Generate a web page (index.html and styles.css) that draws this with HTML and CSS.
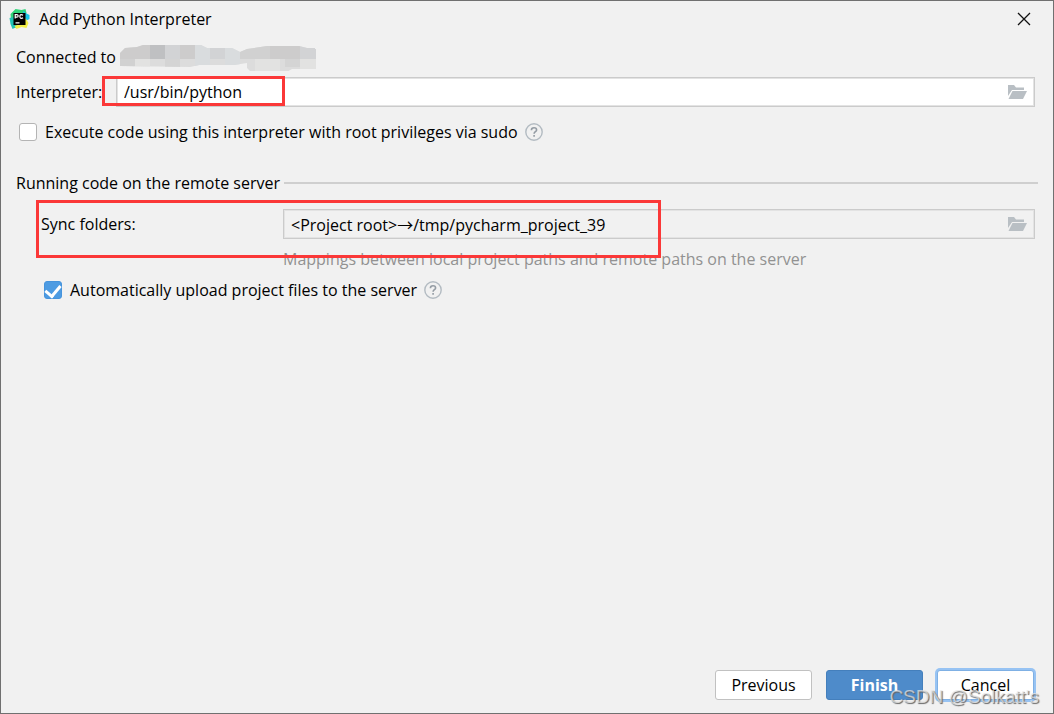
FILE: index.html
```html
<!DOCTYPE html>
<html lang="en">
<head>
<meta charset="utf-8">
<title>Add Python Interpreter</title>
<link rel="stylesheet" href="styles.css">
</head>
<body>
<svg class="defs" aria-hidden="true">
  <symbol id="folder" viewBox="0 0 20 16">
    <path d="M1 1h6l2 2.500h8V6H5L1 12z" fill="#b9bfc4"/>
    <path d="M5.500 7H20l-4 8H1.500z" fill="#b9bfc4"/>
  </symbol>
  <symbol id="help" viewBox="0 0 18 18">
    <circle cx="9" cy="9" r="8.200" fill="none" stroke="#b3bbc2" stroke-width="1.400"/>
    <path d="M6.400 7.200C6.400 5.500 7.500 4.700 9 4.700s2.600.9 2.600 2.200C11.600 8.700 9.100 8.700 9.100 10.700M9.100 12v1.700" fill="none" stroke="#949ca4" stroke-width="1.600"/>
  </symbol>
</svg>
<main class="dialog">
  <header class="titlebar">
    <svg class="logo" viewBox="0 0 20 20" aria-hidden="true">
      <path d="M1 5 6 0l6 1 4-1 1 4-5 12-7 3-3-3z" fill="#2fd579"/>
      <path d="M0 9l4-1 3 10-4 2-2-5z" fill="#20c3b4"/>
      <path d="M14 2l2 2 4 2v4l-4 2-4-5z" fill="#18c6e8"/>
      <path d="M16 9l3 5-2 5-5-1-5 2-2-3 9-3z" fill="#f3ee46"/>
      <path d="M4 4h12v12H4z" fill="#000"/>
      <path d="M5.700 9.500V5.700h1.600q1.400 0 1.400 1.200T7.300 8.200H5.700M13.600 6.300q-2.700-1.600-3.200.6c-.5 2.500 1.500 3 3.200 1.900M6 13.800h4" fill="none" stroke="#fff" stroke-width="1.200"/>
    </svg>
    <h1 class="title">Add Python Interpreter</h1>
    <button class="close" type="button" aria-label="Close">
      <svg class="close-icon" viewBox="0 0 14 14"><path d="M1 1l12 12M13 1 1 13" stroke="#111" stroke-width="1.300"/></svg>
    </button>
  </header>

  <form class="content">
    <div class="connected">
      <span>Connected to</span>
      <svg class="redacted" viewBox="0 0 196 28" role="img" aria-label="Hidden host">
        <clipPath id="smudge"><path d="M0 23V10l5-5 12-1 6-2h58l6 3h25l8 4 7-3 20-3h32l8 2h8v1h11v12l-3 6-6 2h-25l-7 4h-33l-5-5v-5l-13 2H79l-9 2z"/></clipPath>
        <g clip-path="url(#smudge)">
          <path d="M0 0h196v28H0z" fill="#dcdcdc"/>
          <path d="M0 0h30v16H0zM60 0h15v16H60zM150 0h30v16h-30z" fill="#cdcccc"/>
          <path d="M0 16h15v12H0zM120 3h30v13h-30z" fill="#d1d1d1"/>
          <path d="M30 0h15v16H30z" fill="#bfc0c2"/>
          <path d="M45 0h15v16H45zM90 0h15v16H90zM180 0h16v16h-16z" fill="#d2d3d5"/>
          <path d="M75 0h15v28H75zM105 0h15v28h-15z" fill="#d9dcde"/>
          <path d="M15 16h15v12H15zM135 16h25v12h-25zM180 16h16v12h-16z" fill="#e2e2e1"/>
          <path d="M45 16h15v8H45zM165 16h15v8h-15z" fill="#d4d4d4"/>
        </g>
      </svg>
    </div>

    <div class="row">
      <label class="interpreter-label" for="interpreter">Interpreter:</label>
      <div class="field">
        <input class="input" id="interpreter" type="text" value="/usr/bin/python">
        <button class="browse" type="button" aria-label="Browse interpreter"><svg class="folder"><use href="#folder"/></svg></button>
      </div>
      <span class="mark mark-interpreter"></span>
    </div>

    <div class="sudo">
      <input class="check" id="sudo" type="checkbox">
      <label class="check-label" for="sudo">Execute code using this interpreter with root privileges via sudo</label>
      <svg class="help" role="img" aria-label="Help"><use href="#help"/></svg>
    </div>

    <div class="section">
      <h2 class="section-title">Running code on the remote server</h2>
      <span class="rule"></span>
    </div>

    <div class="remote">
      <label class="sync-label" for="sync">Sync folders:</label>
      <div class="field field-readonly">
        <input class="input" id="sync" type="text" readonly value="&lt;Project root&gt;→/tmp/pycharm_project_39">
        <button class="browse" type="button" aria-label="Browse sync folders"><svg class="folder"><use href="#folder"/></svg></button>
      </div>
      <p class="hint">Mappings between local project paths and remote paths on the server</p>
      <span class="mark mark-sync"></span>
    </div>

    <div class="upload">
      <input class="check" id="upload" type="checkbox" checked>
      <label class="check-label" for="upload">Automatically upload project files to the server</label>
      <svg class="help" role="img" aria-label="Help"><use href="#help"/></svg>
    </div>
  </form>

  <footer class="footer">
    <button class="button" type="button">Previous</button>
    <button class="button button-primary" type="button">Finish</button>
    <button class="button button-focused" type="button">Cancel</button>
    <span class="watermark">CSDN @Solkatt's</span>
  </footer>
</main>
</body>
</html>
```
FILE: styles.css
```css
* { box-sizing: border-box; }

body {
  margin: 0;
  color: #000;
  background: #f1f1f1;
  font: 16px/20px "Open Sans", "Noto Sans CJK SC", sans-serif;
}

button, input { font: inherit; color: inherit; }
button, .input { border: 0; background: none; padding: 0; }

.defs { position: absolute; width: 0; height: 0; }

.dialog {
  display: flex;
  flex-direction: column;
  min-height: 100vh;
  border: 1px solid #707070;
}

.titlebar {
  display: flex;
  align-items: center;
  height: 36px;
  padding: 0 20px 0 8px;
}
.logo { width: 21px; height: 20px; }
.title { flex: 1; margin: 0 0 0 9px; font-size: 16px; font-weight: 400; }
.close { display: flex; padding: 2px; }
.close-icon { width: 14px; height: 14px; }

.content { padding: 0 15px; }

.connected { display: flex; align-items: center; gap: 4px; height: 40px; }
.redacted { width: 196px; height: 28px; }

.row { position: relative; display: flex; align-items: center; padding-right: 3px; }
.interpreter-label { width: 100px; }

.field {
  display: flex;
  align-items: center;
  flex: 1;
  height: 30px;
  padding: 0 7px;
  border: 1px solid #cbcbcb;
  outline: 1px solid #e3e3e3;
  outline-offset: -2px;
  background: #fff;
}
.field-readonly { background: #f1f1f1; }
.input { flex: 1; min-width: 0; height: 26px; outline: 0; }
.browse { display: flex; }
.folder { width: 20px; height: 16px; }

.sudo { display: flex; align-items: center; height: 50px; padding-left: 3px; }
.upload { display: flex; align-items: center; height: 20px; padding-left: 28px; }

.check {
  appearance: none;
  display: grid;
  place-items: center;
  width: 18px;
  height: 18px;
  margin: 0;
  border: 1px solid #b4b4b4;
  border-radius: 3px;
  background: #fff;
}
.check:checked { border-color: #4593dc; background: #4d9be2; }
.check:checked::after {
  content: "";
  width: 7px;
  height: 12px;
  border: solid #fff;
  border-width: 0 3px 3px 0;
  transform: translateY(-1px) rotate(40deg);
}
.check-label { margin: 0 7px 0 8px; }
.help { width: 18px; height: 18px; }

.section { display: flex; align-items: center; gap: 4px; height: 52px; }
.section-title { margin: 0; font-size: 16px; font-weight: 400; }
.rule { flex: 1; height: 2px; background: #cfcfcf; }

.remote {
  position: relative;
  display: grid;
  grid-template-columns: 242px 1fr;
  align-items: center;
  padding: 0 3px 0 25px;
}
.hint { grid-column: 2; margin: 0; line-height: 41px; color: #929292; }

.mark { position: absolute; border: 3px solid #fb3838; pointer-events: none; }
.mark-interpreter { left: 86px; top: -1px; width: 183px; height: 30px; }
.mark-sync { left: 20px; top: -9px; width: 625px; height: 58px; }

.footer {
  position: relative;
  display: flex;
  justify-content: flex-end;
  gap: 14px;
  margin-top: auto;
  padding: 0 19px 13px;
}
.button {
  width: 97px;
  height: 30px;
  border: 1px solid #c1c1c1;
  border-radius: 3px;
  background: #fff;
}
.button-primary { border-color: #447fbc; background: #4e8bca; color: #fff; font-weight: 700; }
.button-focused { border-color: #7fb0e4; box-shadow: 0 0 0 2px #97c3f3; }
.watermark {
  position: absolute;
  right: 14px;
  bottom: 4px;
  color: #e8e8e8b0;
  font: 19px/24px "Liberation Sans", sans-serif;
  text-shadow: 1px 1px 1px #666;
  pointer-events: none;
}
```
